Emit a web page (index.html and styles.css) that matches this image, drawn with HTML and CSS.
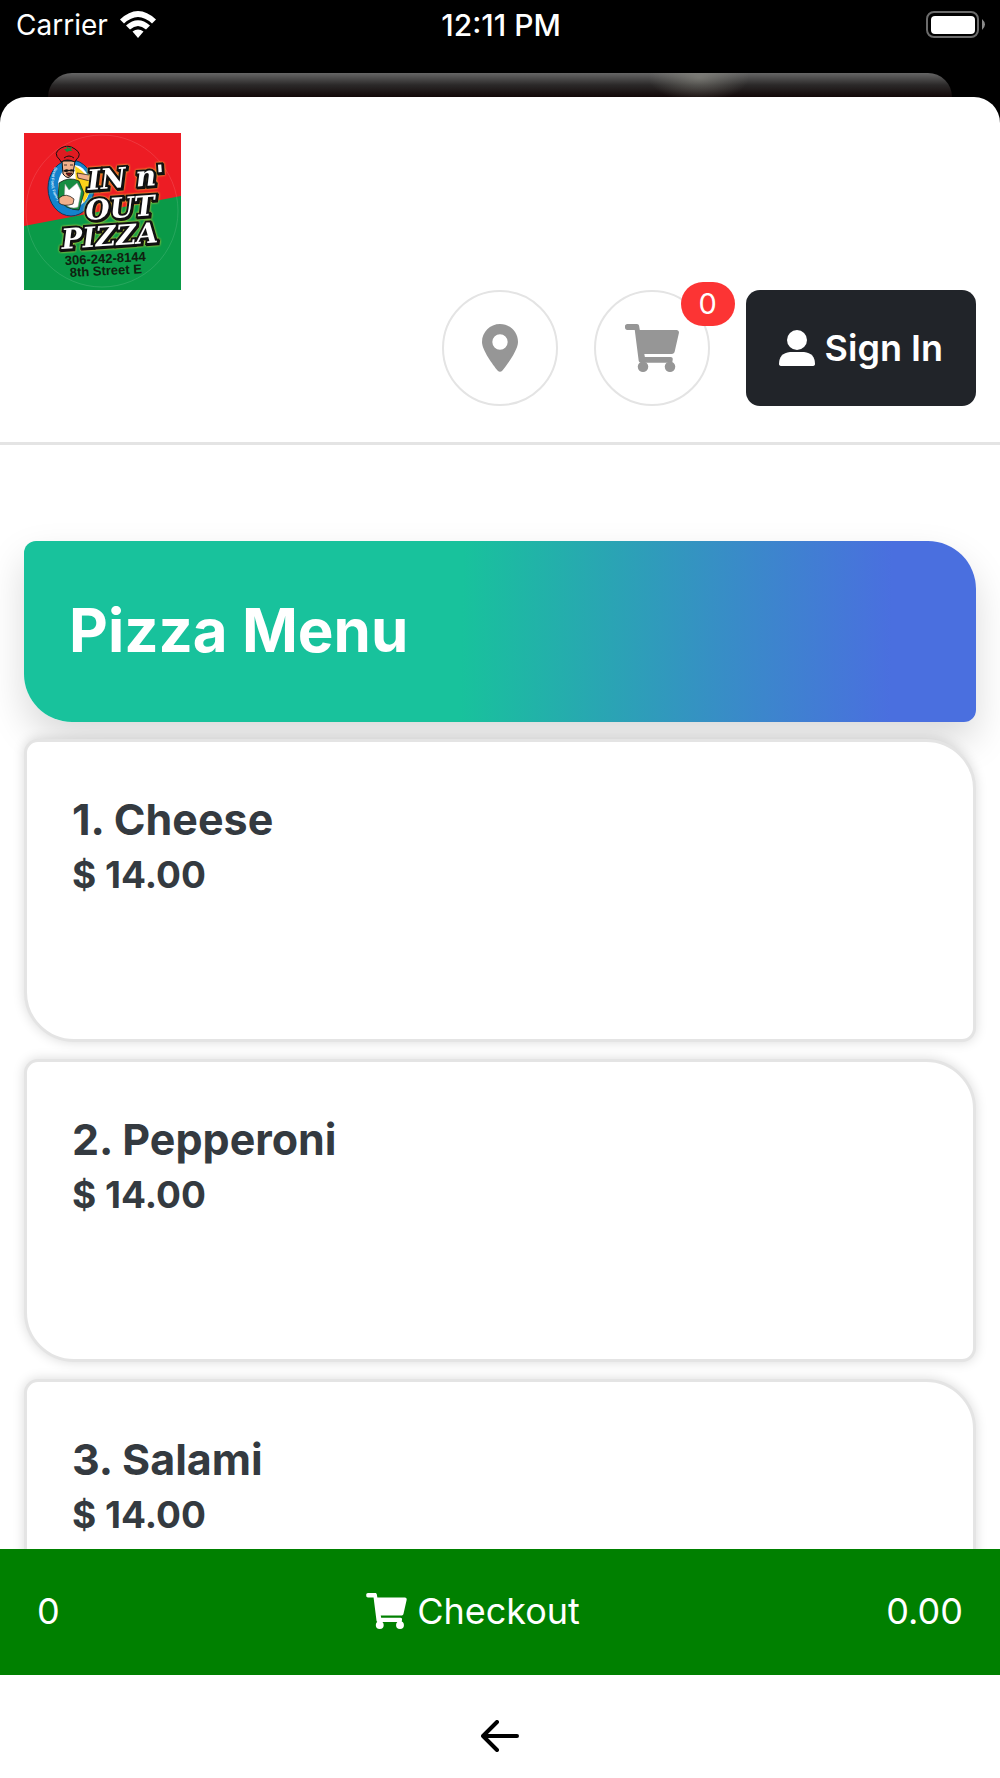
FILE: index.html
```html
<!DOCTYPE html>
<html lang="en">
<head>
<meta charset="UTF-8">
<meta name="viewport" content="width=device-width, initial-scale=1.0">
<title>In n' Out Pizza - Menu</title>
<link rel="stylesheet" href="styles.css">
</head>
<body>
<svg class="symbols" aria-hidden="true">
  <symbol id="cart" viewBox="0 0 576 512">
    <path d="M0 24C0 10.700 10.700 0 24 0H128C139 0 148 8 150 19L158 64H550C566 64 579 79 575 95L530 294C527 309 514 320 499 320H206L212 352H488C501 352 512 363 509 378L504 412H168C157 412 148 404 146 393L104 64H24C10.700 64 0 53 0 40Z"/>
    <circle cx="192" cy="456" r="56"/>
    <circle cx="480" cy="456" r="56"/>
  </symbol>
</svg>

<div class="status-bar">
  <div class="carrier">
    <span>Carrier</span>
    <svg class="wifi" viewBox="0 0 36 27" fill="#fff">
      <path d="M0 8.500Q18 -8.500 36 8.500L32 12.500Q18 -0.500 4 12.500Z"/>
      <path d="M6 14.500Q18 4 30 14.500L26 18.500Q18 11.500 10 18.500Z"/>
      <path d="M12.500 20.500Q18 16.500 23.500 20.500L18 27Z"/>
    </svg>
  </div>
  <div class="clock">12:11 PM</div>
  <svg class="battery" viewBox="0 0 60 28">
    <rect x="1" y="1" width="51" height="25" rx="7" fill="none" stroke="#6b6b6b" stroke-width="2"/>
    <rect x="5" y="5" width="44" height="18" rx="4" fill="#fff"/>
    <path d="M56 8Q62 13.500 56 19Z" fill="#8a8a8a"/>
  </svg>
</div>
<div class="back-sheet"></div>

<div class="sheet">
  <header>
    <a class="logo" href="#" aria-label="In n' Out Pizza">
      <svg viewBox="0 0 157 157">
        <rect width="157" height="157" fill="#0a9a48"/>
        <path d="M0 0H157V63L0 93Z" fill="#ed1c24"/>
        <circle cx="78" cy="78" r="76" fill="none" stroke="#fff" stroke-opacity=".12"/>
        <ellipse cx="47" cy="55" rx="23" ry="28" fill="#1482cc" stroke="#073a63"/>
        <ellipse cx="50" cy="53" rx="16" ry="21" fill="#fff"/>
        <path d="M51 33Q67 42 66 58L60 70L52 50Z" fill="#fdd31a"/>
        <path id="ring" d="M31 34C22 52 28 80 66 77" fill="none"/>
        <text class="logo-ring"><textPath href="#ring">Great Food, Family Friendly</textPath></text>
        <path d="M35 50Q45 43 55 48L60 60L55 77Q41 77 34 65Z" fill="#168d42" stroke="#111" stroke-width=".7"/>
        <path d="M41 51L45 57L53 50L57 58L54 74Q46 77 40 70Z" fill="#fff" stroke="#999" stroke-width=".5"/>
        <path d="M35 65Q42 59 50 66L49 71Q40 74 35 70Z" fill="#f2b08c" stroke="#111" stroke-width=".7"/>
        <path d="M53 40L65 42L72 38L73 43L66 48L54 45Z" fill="#f2b08c" stroke="#111" stroke-width=".7"/>
        <path d="M38 28L39 41Q44 48 49 41L51 28Z" fill="#f2b08c" stroke="#111"/>
        <path d="M39 38Q42 35 45 37Q49 35 51 38Q48 39 45 38Q42 40 39 38Z" fill="#111"/>
        <path d="M42 40H48Q45 46 42 40ZM40 32H43M46 32H49" fill="#8c1010" stroke="#111" stroke-width=".8"/>
        <path d="M36 27Q28 20 37 15Q44 11 51 16Q59 21 52 27L51 29Q43 25 37 29Z" fill="#df1b21" stroke="#111"/>
        <path d="M40 16L43 16L42 13L45 15L48 14L47 17L49 18L45 18L43 19Z" fill="#138b3d"/>
        <path d="M40 25Q45 21 50 25" fill="none" stroke="#111"/>
        <g class="logo-name">
          <text x="64" y="57" transform="rotate(-4 64 57)">IN n'</text>
          <text x="62" y="87" transform="rotate(-4 62 87)">OUT</text>
          <text x="38" y="116" transform="rotate(-4 38 116)">PIZZA</text>
        </g>
        <g class="logo-info">
          <text x="41" y="132" transform="rotate(-3 41 132)">306-242-8144</text>
          <text x="46" y="144" transform="rotate(-3 46 144)">8th Street E</text>
        </g>
      </svg>
    </a>
    <nav class="actions">
      <button class="round" type="button" aria-label="Location">
        <svg class="pin" viewBox="0 0 384 512"><path fill-rule="evenodd" d="M215.700 499C267 435 384 279 384 192C384 86 298 0 192 0S0 86 0 192C0 279 117 435 168.300 499C180.600 514.500 203.400 514.500 215.700 499ZM192 110A82 82 0 1 1 192 274A82 82 0 1 1 192 110Z"/></svg>
      </button>
      <button class="round" type="button" aria-label="Cart">
        <svg class="cart"><use href="#cart"/></svg>
        <span class="badge">0</span>
      </button>
      <button class="sign-in" type="button">
        <svg class="user" viewBox="0 0 36 36"><circle cx="18" cy="10" r="10"/><path d="M11 22H25Q36 23 36 34Q36 36 33 36H3Q0 36 0 34Q0 23 11 22Z"/></svg>
        Sign In
      </button>
    </nav>
  </header>

  <main>
    <h1>Pizza Menu</h1>
    <article class="item">
      <h2>1. Cheese</h2>
      <p>$ 14.00</p>
    </article>
    <article class="item">
      <h2>2. Pepperoni</h2>
      <p>$ 14.00</p>
    </article>
    <article class="item">
      <h2>3. Salami</h2>
      <p>$ 14.00</p>
    </article>
  </main>

  <button class="checkout" type="button">
    <span>0</span>
    <span class="checkout-label"><svg class="cart-small"><use href="#cart"/></svg>Checkout</span>
    <span>0.00</span>
  </button>
  <footer>
    <button class="back" type="button" aria-label="Back">
      <svg viewBox="0 0 38 32"><path d="M16 2L2 16L16 30M2 16H36"/></svg>
    </button>
  </footer>
</div>
</body>
</html>
```

FILE: styles.css
```css
* {
  box-sizing: border-box;
}

body {
  margin: 0;
  height: 100vh;
  display: flex;
  flex-direction: column;
  overflow: hidden;
  background-color: #000;
  color: #343a40;
  font-family: Inter, "Liberation Sans", sans-serif;
}

button {
  font-family: inherit;
  border: none;
  padding: 0;
  cursor: pointer;
}

svg {
  display: block;
}

.symbols {
  position: absolute;
  width: 0;
  height: 0;
}

/* Status bar */
.status-bar {
  flex: none;
  display: grid;
  grid-template-columns: 1fr auto 1fr;
  align-items: center;
  height: 73px;
  padding: 0 14px 24px 16px;
  color: #fff;
  font-size: 28px;
}

.carrier {
  display: flex;
  align-items: center;
  gap: 12px;
}

.wifi {
  width: 36px;
  height: 27px;
}

.clock {
  font-size: 30px;
  font-weight: 500;
}

.battery {
  width: 60px;
  height: 28px;
  justify-self: end;
}

.back-sheet {
  flex: none;
  height: 24px;
  margin: 0 48px;
  border-radius: 24px 24px 0 0;
  background: radial-gradient(ellipse 50px 24px at 72% 20%, rgba(160, 160, 150, 0.5), transparent), linear-gradient(#666, #2b2929 50%, #120808);
}

/* Sheet */
.sheet {
  flex: 1;
  min-height: 0;
  display: flex;
  flex-direction: column;
  overflow: hidden;
  background-color: #fff;
  border-radius: 26px 26px 0 0;
}

header {
  flex: none;
  padding: 36px 24px;
  border-bottom: 3px solid #e4e4e4;
}

.logo {
  display: block;
  width: 157px;
}

.logo-name {
  font-family: "DejaVu Serif", serif;
  font-size: 28px;
  font-weight: bold;
  font-style: italic;
  fill: #fff;
  stroke: #111;
  stroke-width: 4px;
  paint-order: stroke;
  filter: drop-shadow(1px 1px 0 #111) drop-shadow(0 0 1px #f5e533);
}

.logo-info {
  font-family: "Liberation Sans", sans-serif;
  font-size: 13px;
  font-weight: bold;
  fill: #10210f;
}

.logo-ring {
  font-family: "Liberation Sans", sans-serif;
  font-size: 4px;
  font-weight: bold;
  fill: #d7effc;
}

.actions {
  display: flex;
  justify-content: flex-end;
  gap: 36px;
}

.round {
  position: relative;
  display: flex;
  align-items: center;
  justify-content: center;
  width: 116px;
  height: 116px;
  border: 2px solid #e4e4e4;
  border-radius: 50%;
  background-color: #fff;
  fill: #969696;
}

.pin {
  width: 36px;
  height: 48px;
}

.cart {
  width: 54px;
  height: 48px;
}

.badge {
  position: absolute;
  top: -10px;
  right: -27px;
  width: 54px;
  border-radius: 22px;
  background-color: #fc3434;
  color: #fff;
  font-size: 29px;
  font-weight: 400;
  line-height: 44px;
}

.sign-in {
  display: flex;
  align-items: center;
  gap: 10px;
  padding: 0 33px;
  border-radius: 14px;
  background-color: #212429;
  color: #fff;
  fill: #fff;
  font-size: 36px;
  font-weight: 600;
}

.user {
  width: 36px;
  height: 36px;
}

/* Menu */
main {
  flex: 1;
  min-height: 0;
  overflow: hidden;
  padding: 96px 24px 0;
}

h1 {
  margin: 0 0 17px;
  padding: 51px 45px 54px;
  border-radius: 12px 48px;
  background: linear-gradient(91deg, #18c29c 46%, #3690c4 72%, #4a6fdf 91%);
  box-shadow: 0 18px 38px rgba(0, 0, 0, 0.15);
  color: #fff;
  font-size: 60px;
  line-height: 76px;
}

.item {
  min-height: 303px;
  margin-bottom: 17px;
  padding: 49px 45px;
  border: 3px solid #e4e4e4;
  border-radius: 14px 50px;
  background-color: #fff;
  box-shadow: 0 0 12px rgba(0, 0, 0, 0.15);
}

h2 {
  margin: 0;
  font-size: 43px;
  line-height: 56px;
}

.item p {
  margin: 0;
  font-size: 37px;
  font-weight: 700;
  line-height: 56px;
}

/* Bottom bars */
.checkout {
  flex: none;
  display: flex;
  align-items: center;
  justify-content: space-between;
  height: 126px;
  padding: 0 37px 2px;
  background-color: #008000;
  color: #fff;
  fill: #fff;
  font-size: 36px;
  font-weight: 400;
}

.checkout-label {
  display: flex;
  align-items: center;
  gap: 10px;
}

.cart-small {
  width: 41px;
  height: 36px;
}

footer {
  flex: none;
  display: flex;
  justify-content: center;
  padding: 45px 0 26px;
}

.back {
  background: none;
}

.back svg {
  width: 38px;
  height: 32px;
  fill: none;
  stroke: #000;
  stroke-width: 4px;
  stroke-linecap: round;
  stroke-linejoin: round;
}
```
